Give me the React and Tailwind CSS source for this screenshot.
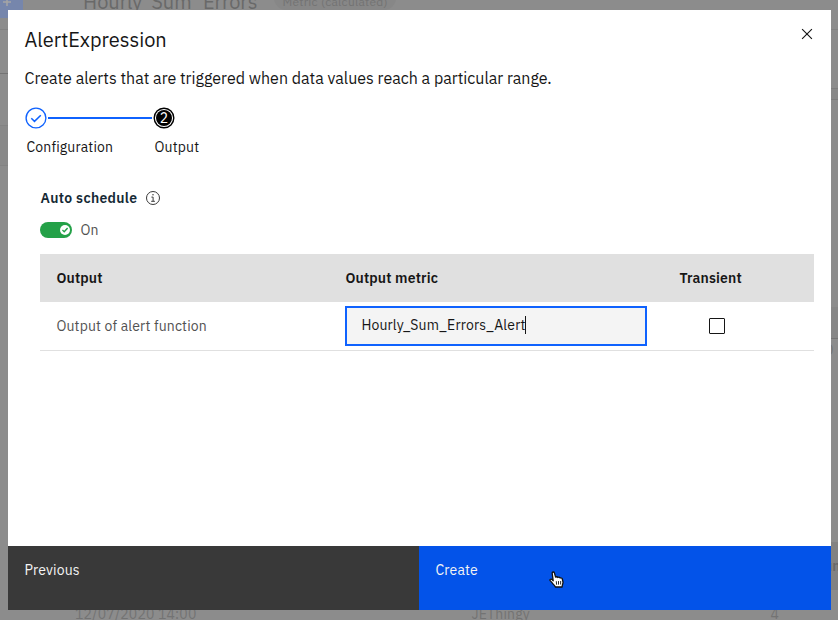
import React from "react";

function Backdrop() {
  return (
    <div className="flex h-[620px] w-[838px] flex-col overflow-hidden bg-[#8c8c8c] text-[#737373]">
      <div className="flex h-[30px] shrink-0 items-start border-b border-[#828282]">
        <div className="flex h-[18px] w-[23px] justify-center bg-[#7686ac]">
          <svg className="mt-[-2px] -ml-2.5 h-2 w-2" viewBox="0 0 8 8" stroke="#a5a5a5" strokeWidth="1.5">
            <path d="M4 0v8M0 4h8" />
          </svg>
        </div>
        <div className="mt-[-12px] ml-[60px] text-[20px] leading-7 whitespace-nowrap text-[#696969]">Hourly_Sum_Errors</div>
        <div className="mt-[-14px] ml-[17px] h-6 rounded-full bg-[#878787] px-2 pt-[8px] text-xs leading-4 tracking-[0.24px] whitespace-nowrap">Metric (calculated)</div>
      </div>
      <div className="flex h-[512px] shrink-0 justify-between">
        <div className="flex w-2 flex-col">
          <div className="h-[44px] border-b border-[#737373]" />
          <div className="h-[52px] border-b border-[#838383]" />
          <div className="h-[40px] border-b border-[#838383] bg-[#898989]" />
        </div>
        <div className="flex w-[7px] flex-col overflow-hidden">
          <div className="h-[59px] border-b border-[#7d7d7d]" />
          <div className="h-[11px] border-b border-[#7d7d7d] bg-[#888888]" />
          <div className="h-[207px]" />
          <div className="h-[32px] border-b border-[#747474] bg-[#868686]" />
          <div className="-ml-[6px] pt-[3px] text-sm leading-4">0</div>
        </div>
      </div>
      <div className="flex h-[48px] shrink-0 justify-end text-sm font-semibold text-[#696969]">
        <div className="flex w-[7px] items-center bg-[#828282]">
          <div className="-ml-[7px] shrink-0">un</div>
        </div>
      </div>
      <div className="flex h-[30px] shrink-0 items-center pt-[18px] text-sm leading-5 tracking-[0.16px]">
        <span className="ml-[75px] w-[396.5px]">12/07/2020 14:00</span>
        <span className="w-[299px]">JEThingy</span>
        <span>4</span>
      </div>
    </div>
  );
}

function Progress() {
  return (
    <div className="mt-[18px] ml-[17px] flex">
      <div className="w-[128px]">
        <div className="flex h-[22px] items-center">
          <svg className="h-[22px] w-[22px]" viewBox="0 0 22 22" fill="none" stroke="#0f62fe">
            <circle cx="11" cy="11" r="9.9" strokeWidth="1.35" />
            <path d="M6.3 11.2l3.2 3.2 6.3-6.2" strokeWidth="1.5" />
          </svg>
          <div className="ml-px h-0.5 w-[104px] bg-[#0f62fe]" />
        </div>
        <div className="mt-2 ml-[1.5px] text-sm leading-5 tracking-[0.16px]">Configuration</div>
      </div>
      <div>
        <svg className="h-[22px] w-[22px]" viewBox="0 0 22 22">
          <circle cx="11" cy="11" r="9.8" fill="none" stroke="#000" strokeWidth="1.4" />
          <circle cx="11" cy="11" r="8" fill="#000" />
          <text x="11" y="16" textAnchor="middle" fontSize="14" fill="#fff">2</text>
        </svg>
        <div className="mt-2 ml-[1.5px] text-sm leading-5 tracking-[0.16px]">Output</div>
      </div>
    </div>
  );
}

function OutputTable() {
  return (
    <div className="mt-[16px] w-[774px]">
      <div className="flex h-12 items-center bg-[#e0e0e0] text-sm font-semibold tracking-[0.16px]">
        <div className="w-[305px] pl-[16.4px]">Output</div>
        <div className="w-[334px] pl-[0.4px]">Output metric</div>
        <div className="pl-[0.4px]">Transient</div>
      </div>
      <div className="flex h-[49px] items-center border-b border-[#e0e0e0] text-sm tracking-[0.16px]">
        <div className="w-[305px] pl-[16.4px] text-[#525252]">Output of alert function</div>
        <div className="flex h-10 w-[302px] items-center border-2 border-[#0f62fe] bg-[#f4f4f4] pb-0.5 pl-[14.4px]">
          <span>Hourly_Sum_Errors_Alert</span>
          <span className="-ml-px h-[18px] w-px bg-[#161616]" />
        </div>
        <div className="ml-[62px] h-4 w-4 rounded-[1px] border border-[#161616]" />
      </div>
    </div>
  );
}

export default function App() {
  return (
    <div className="relative h-[620px] w-[838px] overflow-hidden font-['IBM_Plex_Sans','Roboto',sans-serif]">
      <Backdrop />
      <div className="absolute top-[10px] left-2 flex h-[600px] w-[823px] flex-col bg-white text-[#161616]">
        <div className="flex h-[57px] shrink-0 justify-between">
          <h1 className="mt-[17px] ml-[16.5px] text-[20px] leading-[26px]">AlertExpression</h1>
          <svg className="mt-4 mr-4 h-4 w-4" viewBox="0 0 16 16" stroke="#161616" strokeWidth="1.15">
            <path d="M3.1 3.1l9.8 9.8M12.9 3.1l-9.8 9.8" />
          </svg>
        </div>
        <p className="ml-[16.5px] h-[22px] text-base leading-[22px] whitespace-nowrap">Create alerts that are triggered when data values reach a particular range.</p>
        <Progress />
        <div className="mt-[31px] ml-8 flex-1">
          <div className="flex h-5 items-center">
            <span className="ml-[0.5px] text-sm font-semibold tracking-[0.32px] text-[#152935]">Auto schedule</span>
            <svg className="ml-[7.5px] h-4 w-4" viewBox="0 0 16 16" fill="none" stroke="#393939">
              <circle cx="8" cy="8" r="6.5" />
              <path d="M6.4 7.1h1.7v4M6.2 11.3h3.7" />
              <circle cx="8" cy="4.8" r=".75" fill="#393939" stroke="none" />
            </svg>
          </div>
          <div className="mt-[14px] flex h-4 items-center">
            <div className="flex h-4 w-8 items-center justify-end rounded-full bg-[#24a148] pr-0.5">
              <div className="flex h-[10px] w-[10px] items-center justify-center rounded-full bg-white">
                <svg className="h-[6px] w-[6px]" viewBox="0 0 6 6" fill="none" stroke="#24a148" strokeWidth="1.4"><path d="M.4 3l1.8 1.7L5.6 1.1" /></svg>
              </div>
            </div>
            <span className="ml-[8.5px] text-sm text-[#525252]">On</span>
          </div>
          <OutputTable />
        </div>
        <div className="flex h-16 shrink-0 text-sm leading-5 text-[#f4f4f4]">
          <button className="flex w-[411px] bg-[#393939] pt-[14px] pl-[16.5px] tracking-[0.16px]">Previous</button>
          <button className="flex w-[412px] bg-[#0353e9] pt-[14px] pl-[16.5px] tracking-[0.16px]">Create</button>
        </div>
      </div>
      <svg className="absolute top-[571px] left-[549px] h-[18px] w-4" viewBox="0 0 16 18" fill="white" stroke="#111" strokeWidth="1.3" strokeLinejoin="round">
        <path d="M4.2 9.8L3.2 2.3C3 .8 5 .5 5.4 1.9L6.6 6.2C7.3 5.4 8.4 5.7 8.8 6.5 9.5 5.9 10.7 6.2 11.1 7c.8-.4 2 .1 2.2 1l.7 3c.2 1-.5 2.3-.7 3.3l-.2 1.7H6.4C6 14.8 4.4 13.5 3.4 12.1L1.4 9.9C.3 8.6 1.7 7.6 2.8 8.4z" />
        <path d="M7.3 10.2l.3 3.5M9.5 10.1v3.5M11.7 10l-.1 3.5" fill="none" strokeWidth=".9" />
      </svg>
    </div>
  );
}
